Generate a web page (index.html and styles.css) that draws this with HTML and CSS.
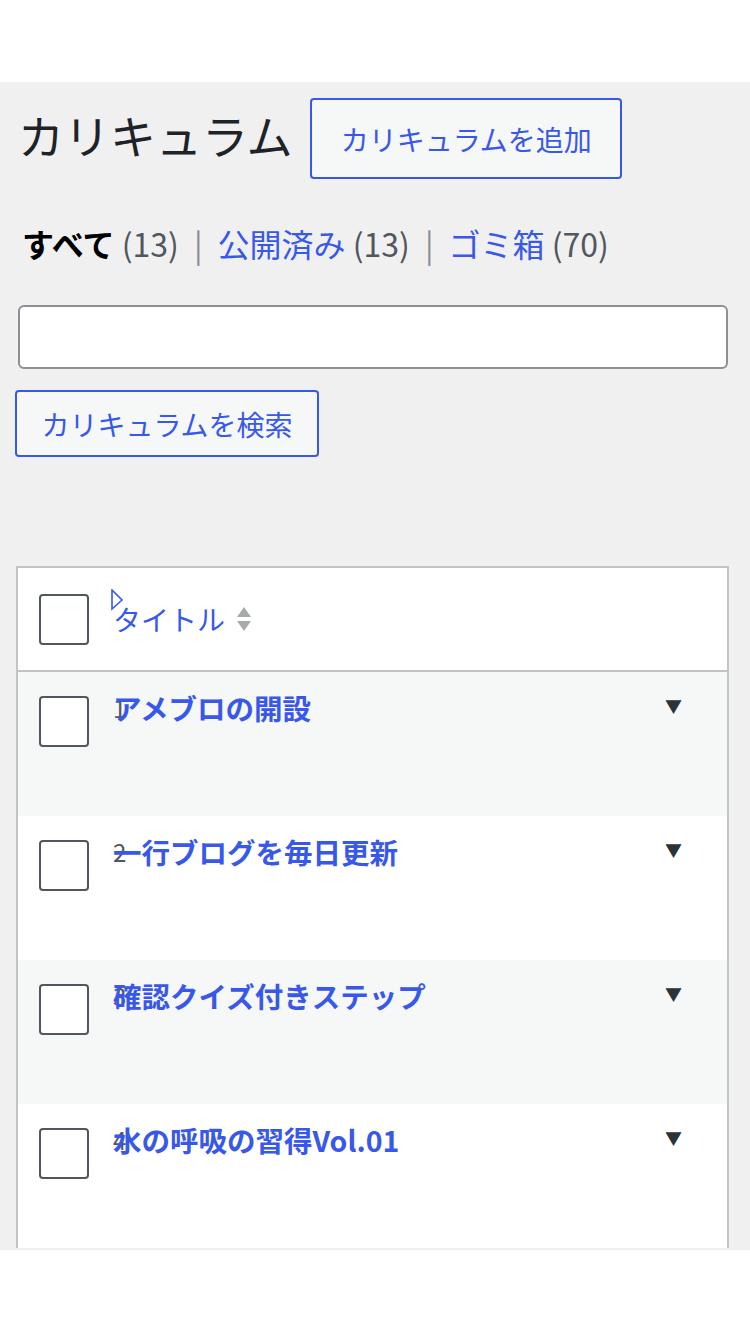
FILE: index.html
```html
<!DOCTYPE html>
<html lang="ja">
<head>
<meta charset="UTF-8">
<meta name="viewport" content="width=device-width, initial-scale=1.0">
<title>カリキュラム</title>
<link rel="stylesheet" href="styles.css">
</head>
<body>
    <div class="top-bar"></div>
    <div class="wrap">
        <div class="page-header">
            <h1 class="page-title">カリキュラム</h1>
            <a class="add-new" href="#">カリキュラムを追加</a>
        </div>
        <ul class="subsubsub">
            <li class="current">すべて <span class="count">(13)</span></li>
            <li class="sep">|</li>
            <li><a href="#">公開済み</a> <span class="count">(13)</span></li>
            <li class="sep">|</li>
            <li><a href="#">ゴミ箱</a> <span class="count">(70)</span></li>
        </ul>
        <input type="search" class="search-input">
        <div>
            <button class="search-btn">カリキュラムを検索</button>
        </div>
        <div class="list-table">
            <div class="table-head">
                <span class="check"></span>
                <span class="head-title">
                    <svg class="cursor" width="14" height="22" viewBox="0 0 14 22"><path d="M2 1 L2 20 L12 11 Z" fill="none" stroke="#3858e9" stroke-width="1.6"/></svg>
                    <a href="#">タイトル</a>
                    <svg class="sort" width="18" height="30" viewBox="0 0 18 30"><path d="M9 3 L16 13 L2 13 Z" fill="#a7aaad"/><path d="M2 17 L16 17 L9 27 Z" fill="#a7aaad"/></svg>
                </span>
            </div>
            <div class="row alt">
                <span class="check"></span>
                <span class="row-title"><span class="row-num">1</span><a href="#">アメブロの開設</a></span>
                <span class="toggle">&#9660;</span>
            </div>
            <div class="row">
                <span class="check"></span>
                <span class="row-title"><span class="row-num">2</span><a href="#">一行ブログを毎日更新</a></span>
                <span class="toggle">&#9660;</span>
            </div>
            <div class="row alt">
                <span class="check"></span>
                <span class="row-title"><span class="row-num">3</span><a href="#">確認クイズ付きステップ</a></span>
                <span class="toggle">&#9660;</span>
            </div>
            <div class="row">
                <span class="check"></span>
                <span class="row-title"><span class="row-num">4</span><a href="#">水の呼吸の習得Vol.01</a></span>
                <span class="toggle">&#9660;</span>
            </div>
        </div>
    </div>
</body>
</html>
```

FILE: styles.css
```css
body {
    margin: 0;
    background-color: #fff;
    color: #1d2327;
    font-family: "Noto Sans CJK JP", "Noto Sans", sans-serif;
}
a {
    color: #3858e9;
    text-decoration: none;
}
.top-bar {
    height: 82px;
}
.wrap {
    box-sizing: border-box;
    background-color: #f0f0f1;
    height: 1168px;
    overflow: hidden;
    padding: 16px 21px 0 16px;
}
.page-header {
    display: flex;
    align-items: center;
    gap: 17px;
}
.page-title {
    margin: 0 0 10px 2px;
    font-size: 46px;
    font-weight: 400;
    letter-spacing: 0;
}
.add-new {
    border: 2px solid #3858e9;
    border-radius: 4px;
    height: 77px;
    padding: 0 28px 0 29px;
    display: flex;
    align-items: center;
    font-size: 28px;
    background-color: #f6f7f7;
}
.subsubsub {
    list-style: none;
    margin: 28px 0 0 6px;
    padding: 0;
    display: flex;
    align-items: center;
    font-size: 32px;
    height: 72px;
}
.subsubsub li {
    white-space: pre;
}
.subsubsub .current {
    font-weight: 700;
    color: #000;
}
.count {
    font-weight: 400;
    color: #50575e;
}
.sep {
    color: #8c8f94;
    padding: 0 15px;
}
.search-input {
    display: block;
    box-sizing: border-box;
    margin: 26px 0 0 2px;
    width: 710px;
    height: 64px;
    border: 2px solid #8c8f94;
    border-radius: 6px;
    background-color: #fff;
    outline: none;
}
.search-btn {
    margin: 21px 0 0 -1px;
    box-sizing: border-box;
    width: 304px;
    height: 67px;
    border: 2px solid #3858e9;
    border-radius: 4px;
    background-color: #f6f7f7;
    color: #3858e9;
    font-family: "Noto Sans CJK JP", sans-serif;
    font-size: 28px;
    padding: 0;
}
.list-table {
    margin-top: 109px;
    width: 713px;
    box-sizing: border-box;
    border: 2px solid #c3c4c7;
    border-bottom: none;
    background-color: #fff;
}
.check {
    display: block;
    box-sizing: border-box;
    width: 50px;
    height: 51px;
    border: 2px solid #50575e;
    border-radius: 4px;
    background-color: #fff;
    flex-shrink: 0;
}
.table-head {
    display: flex;
    align-items: center;
    height: 102px;
    padding-left: 21px;
    border-bottom: 2px solid #c3c4c7;
}
.head-title {
    position: relative;
    margin-left: 24px;
    display: flex;
    align-items: center;
    font-size: 28px;
}
.cursor {
    position: absolute;
    left: -3px;
    top: -10px;
}
.sort {
    margin-left: 10px;
}
.row {
    display: flex;
    align-items: flex-start;
    height: 144px;
    padding: 24px 0 0 21px;
    box-sizing: border-box;
}
.row.alt {
    background-color: #f6f7f7;
}
.row-title {
    position: relative;
    margin-left: 24px;
    margin-top: -9px;
    font-size: 28.5px;
    font-weight: 700;
    flex: 1;
}
.row-num {
    position: absolute;
    left: 0;
    top: 3px;
    color: #50575e;
    font-weight: 400;
    font-size: 24px;
}
.row-title a {
    position: relative;
}
.toggle {
    color: #2c3338;
    font-size: 17px;
    margin: -3px 45px 0 0;
}
```
